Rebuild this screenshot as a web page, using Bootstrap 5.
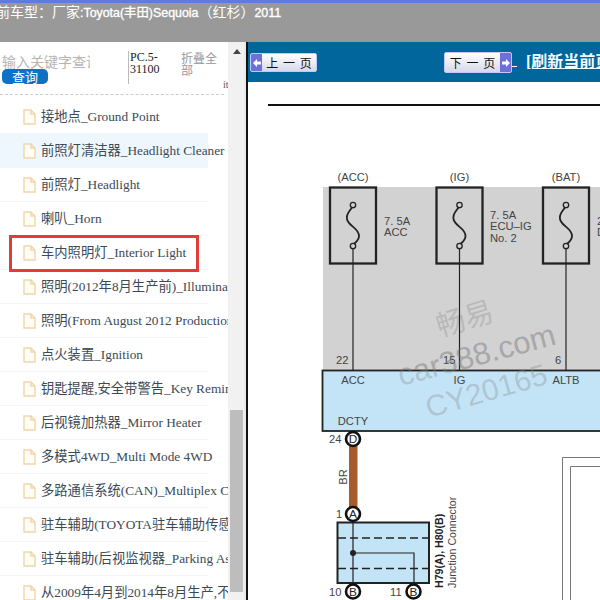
<!DOCTYPE html>
<html lang="zh">
<head>
<meta charset="utf-8">
<title>Sequoia</title>
<link href="https://cdn.jsdelivr.net/npm/bootstrap@5.3.0/dist/css/bootstrap.min.css" rel="stylesheet">
<style>
html,body{height:100%;overflow:hidden;margin:0}
body{font-family:"Liberation Serif","Noto Sans CJK SC",serif;background:#fff}
.frame{width:600px;height:600px;overflow:hidden}
.topstrip{height:42px;background:#999;border-top:3px solid #5b7fd6;flex:none;overflow:hidden}
.toptext{font:14px/18px "Liberation Sans","Noto Sans CJK SC",sans-serif;color:#fff;margin:0 0 0 -18px;white-space:pre}
.toptext b{font-size:12.4px;font-weight:400;-webkit-text-stroke:.35px #fff}
.bodyrow{height:558px}
.side{width:228px;flex:none;overflow:hidden}
.sidehead{height:58px;position:relative}
.searchcol{width:100px;padding:11px 0 0 2px;flex:none}
.keyinput{border:0;padding:0;width:88px;height:16px;font:14px/16px "Noto Sans CJK SC",sans-serif;display:block;background:transparent}
.keyinput::placeholder{color:#b5b5b5}
.querybtn{display:block;width:46px;height:15px;padding:0;border:0;border-radius:5px;background:#0b72c8;color:#fff;font:13px/15px "Noto Sans CJK SC",sans-serif}
.pccol{width:52px;margin:9px 0 0 28px;height:33px;border-left:1px solid #bbb;padding-left:1px;font-size:12px;line-height:12px;color:#222;flex:none}
.foldcol{width:38px;margin:10px 0 0 1px;color:#999;font:12px/12px "Noto Sans CJK SC",sans-serif;flex:none}
.dashline{position:absolute;left:0;top:52px;width:224px;border-top:1px dashed #ccc}
.cutchar{position:absolute;left:223px;top:37px;font-size:10px;line-height:12px;color:#555}
.treelist{width:208px;border-radius:0}
.treerow{height:34px;padding:1px 0 0 23px;border:0;border-bottom:1px solid #f6f4f2;display:flex;align-items:center;gap:5px;background:transparent;font-size:13.3px;line-height:16px;color:#3c4a55;white-space:nowrap;overflow:visible}
.treerow.hovered{background:#eff7fe}
.fileicon{flex:none;width:13px;height:16px}
.redmark{position:absolute;left:9px;top:193px;width:190px;height:37px;border:3px solid #e23b3b;pointer-events:none}
.sbar{width:16px;flex:none;background:#f1f1f1;padding:0 1px 0 2px}
.sup{height:18px;display:flex;align-items:center;justify-content:center;padding-left:0}
.sthumb{height:182px;background:#bdbdbd;margin-top:350px}
.gutter{width:4px;flex:none;background:#e9e9e9;border-right:2px solid #111}
.mainpane{flex:1;min-width:0;overflow:hidden}
.bluebar{height:40px;background:#00669b;position:relative;flex:none}
.pagebtn{position:absolute;display:flex;padding:0;border:1px solid #c4c8f4;border-radius:2px;overflow:hidden;font:12px/17px "Noto Sans CJK SC",sans-serif;color:#111;background:linear-gradient(#fff,#d7d8ea)}
.pagebtn:hover{color:#111;background:linear-gradient(#fff,#d7d8ea)}
.prevbtn{left:2px;top:11px;width:67px;height:19px}
.nextbtn{left:196px;top:10px;width:68px;height:21px;line-height:19px}
.arrowcell{width:11px;background:#6d6fdc;display:flex;align-items:center;justify-content:center;flex:none}
.labelcell{flex:1;text-align:center;word-spacing:2px;white-space:pre}
.refreshlink{position:absolute;left:278px;top:10px;color:#f2fbff;font-size:16px;line-height:20px;font-weight:700;white-space:nowrap;text-decoration:underline}
.refreshlink:hover{color:#f2fbff}
.tinyunder{position:absolute;left:264px;top:10px;color:#fff;font-size:10px;line-height:20px;text-decoration:underline;white-space:pre}
.diagram{display:block;width:352px;height:518px}
.dtxt{font-family:"Liberation Sans",sans-serif;font-size:11.2px;fill:#444}
.dsign{font-size:11.800px;fill:#222}
.dmark{font-family:"Liberation Sans","Noto Sans CJK SC",sans-serif;fill:#8a8a8a;fill-opacity:.36}
</style>
</head>
<body>
<div class="frame d-flex flex-column">
  <div class="topstrip"><p class="toptext">当前车型：厂家<b>:Toyota(丰田)Sequoia</b>（红杉）<b>2011</b></p></div>
  <div class="bodyrow d-flex">
    <aside class="side position-relative">
      <div class="sidehead d-flex">
        <div class="searchcol">
          <input class="keyinput" type="text" placeholder="输入关键字查询" aria-label="关键字">
          <button class="querybtn" type="button">查询</button>
        </div>
        <div class="pccol">PC.5-31100</div>
        <div class="foldcol">折叠全部</div>
        <span class="cutchar">it</span>
        <div class="dashline"></div>
      </div>
      <ul class="list-group treelist">
        <li class="list-group-item treerow"><svg class="fileicon" viewBox="0 0 13 16"><path d="M1 1h7l4 4v10H1z M8 1v4h4" fill="#fffdf8" stroke="#f3d5a6" stroke-width="1.4"/></svg>接地点_Ground Point</li>
        <li class="list-group-item treerow hovered"><svg class="fileicon" viewBox="0 0 13 16"><path d="M1 1h7l4 4v10H1z M8 1v4h4" fill="#fffdf8" stroke="#f3d5a6" stroke-width="1.4"/></svg>前照灯清洁器_Headlight Cleaner</li>
        <li class="list-group-item treerow"><svg class="fileicon" viewBox="0 0 13 16"><path d="M1 1h7l4 4v10H1z M8 1v4h4" fill="#fffdf8" stroke="#f3d5a6" stroke-width="1.4"/></svg>前照灯_Headlight</li>
        <li class="list-group-item treerow"><svg class="fileicon" viewBox="0 0 13 16"><path d="M1 1h7l4 4v10H1z M8 1v4h4" fill="#fffdf8" stroke="#f3d5a6" stroke-width="1.4"/></svg>喇叭_Horn</li>
        <li class="list-group-item treerow"><svg class="fileicon" viewBox="0 0 13 16"><path d="M1 1h7l4 4v10H1z M8 1v4h4" fill="#fffdf8" stroke="#f3d5a6" stroke-width="1.4"/></svg>车内照明灯_Interior Light</li>
        <li class="list-group-item treerow"><svg class="fileicon" viewBox="0 0 13 16"><path d="M1 1h7l4 4v10H1z M8 1v4h4" fill="#fffdf8" stroke="#f3d5a6" stroke-width="1.4"/></svg>照明(2012年8月生产前)_Illumination</li>
        <li class="list-group-item treerow"><svg class="fileicon" viewBox="0 0 13 16"><path d="M1 1h7l4 4v10H1z M8 1v4h4" fill="#fffdf8" stroke="#f3d5a6" stroke-width="1.4"/></svg>照明(From August 2012 Production)</li>
        <li class="list-group-item treerow"><svg class="fileicon" viewBox="0 0 13 16"><path d="M1 1h7l4 4v10H1z M8 1v4h4" fill="#fffdf8" stroke="#f3d5a6" stroke-width="1.4"/></svg>点火装置_Ignition</li>
        <li class="list-group-item treerow"><svg class="fileicon" viewBox="0 0 13 16"><path d="M1 1h7l4 4v10H1z M8 1v4h4" fill="#fffdf8" stroke="#f3d5a6" stroke-width="1.4"/></svg>钥匙提醒,安全带警告_Key Reminder</li>
        <li class="list-group-item treerow"><svg class="fileicon" viewBox="0 0 13 16"><path d="M1 1h7l4 4v10H1z M8 1v4h4" fill="#fffdf8" stroke="#f3d5a6" stroke-width="1.4"/></svg>后视镜加热器_Mirror Heater</li>
        <li class="list-group-item treerow"><svg class="fileicon" viewBox="0 0 13 16"><path d="M1 1h7l4 4v10H1z M8 1v4h4" fill="#fffdf8" stroke="#f3d5a6" stroke-width="1.4"/></svg>多模式4WD_Multi Mode 4WD</li>
        <li class="list-group-item treerow"><svg class="fileicon" viewBox="0 0 13 16"><path d="M1 1h7l4 4v10H1z M8 1v4h4" fill="#fffdf8" stroke="#f3d5a6" stroke-width="1.4"/></svg>多路通信系统(CAN)_Multiplex Communication</li>
        <li class="list-group-item treerow"><svg class="fileicon" viewBox="0 0 13 16"><path d="M1 1h7l4 4v10H1z M8 1v4h4" fill="#fffdf8" stroke="#f3d5a6" stroke-width="1.4"/></svg>驻车辅助(TOYOTA驻车辅助传感器)</li>
        <li class="list-group-item treerow"><svg class="fileicon" viewBox="0 0 13 16"><path d="M1 1h7l4 4v10H1z M8 1v4h4" fill="#fffdf8" stroke="#f3d5a6" stroke-width="1.4"/></svg>驻车辅助(后视监视器_Parking Assist</li>
        <li class="list-group-item treerow"><svg class="fileicon" viewBox="0 0 13 16"><path d="M1 1h7l4 4v10H1z M8 1v4h4" fill="#fffdf8" stroke="#f3d5a6" stroke-width="1.4"/></svg>从2009年4月到2014年8月生产,不带</li>
      </ul>
      <div class="redmark"></div>
    </aside>
    <div class="sbar">
      <div class="sup"><svg width="8" height="5" viewBox="0 0 8 5"><path d="M4 0l4 5H0z" fill="#444"/></svg></div>
      <div class="sthumb"></div>
    </div>
    <div class="gutter"></div>
    <main class="mainpane d-flex flex-column">
      <div class="bluebar">
        <a class="btn pagebtn prevbtn" href="#"><span class="arrowcell"><svg width="8" height="8" viewBox="0 0 8 8"><path d="M0 4l4-4v2.500h4v3H4V8z" fill="#fff"/></svg></span><span class="labelcell">上 一 页</span></a>
        <a class="btn pagebtn nextbtn" href="#"><span class="labelcell">下 一 页</span><span class="arrowcell"><svg width="8" height="8" viewBox="0 0 8 8"><path d="M8 4L4 0v2.500H0v3h4V8z" fill="#fff"/></svg></span></a>
        <span class="tinyunder">&nbsp;&nbsp;</span>
        <a class="refreshlink" href="#">[刷新当前页]</a>
      </div>
      <svg class="diagram" viewBox="248 82 352 518" xmlns="http://www.w3.org/2000/svg">
        <rect x="268" y="104" width="332" height="2" fill="#111"/>
        <rect x="323" y="187" width="277" height="183" fill="#d2d2d3"/>
        <text class="dmark" font-size="29" transform="translate(440 337) rotate(-17)">畅易</text>
        <text class="dmark" font-size="31" transform="translate(401 386) rotate(-15)">car388.com</text>
        <g fill="none" stroke="#222">
          <rect x="330" y="187.500" width="46" height="76" stroke-width="2.300"/>
          <circle cx="353" cy="205" r="2.700" stroke-width="1.300"/>
          <circle cx="353" cy="246" r="2.700" stroke-width="1.300"/>
          <path d="M352 207.500C349 212 346 214 347 219C348 226 359 228 359 236C359 240 356 242 354 244" stroke-width="1.800"/>
          <path d="M353 248.500V370" stroke-width="1.200"/>
        </g>
        <g fill="none" stroke="#222">
          <rect x="436.500" y="187.500" width="46" height="76" stroke-width="2.300"/>
          <circle cx="459.500" cy="205" r="2.700" stroke-width="1.300"/>
          <circle cx="459.500" cy="246" r="2.700" stroke-width="1.300"/>
          <path d="M458.500 207.500C455.500 212 452.500 214 453.500 219C454.500 226 465.500 228 465.500 236C465.500 240 462.500 242 460.500 244" stroke-width="1.800"/>
          <path d="M459.500 248.500V370" stroke-width="1.200"/>
        </g>
        <g fill="none" stroke="#222">
          <rect x="543" y="187.500" width="46" height="76" stroke-width="2.300"/>
          <circle cx="566" cy="205" r="2.700" stroke-width="1.300"/>
          <circle cx="566" cy="246" r="2.700" stroke-width="1.300"/>
          <path d="M565 207.500C562 212 559 214 560 219C561 226 572 228 572 236C572 240 569 242 567 244" stroke-width="1.800"/>
          <path d="M566 248.500V370" stroke-width="1.200"/>
        </g>
        <text class="dtxt" x="353" y="181" text-anchor="middle">(ACC)</text>
        <text class="dtxt" x="459.500" y="181" text-anchor="middle">(IG)</text>
        <text class="dtxt" x="566" y="181" text-anchor="middle">(BAT)</text>
        <text class="dtxt" x="384" y="225">7. 5A</text>
        <text class="dtxt" x="384" y="236">ACC</text>
        <text class="dtxt" x="490" y="219">7. 5A</text>
        <text class="dtxt" x="490" y="230">ECU–IG</text>
        <text class="dtxt" x="490" y="242">No. 2</text>
        <text class="dtxt" x="597" y="225">2</text>
        <text class="dtxt" x="597" y="236">D</text>
        <text class="dtxt" x="336" y="364">22</text>
        <text class="dtxt" x="443" y="364">15</text>
        <text class="dtxt" x="555" y="364">6</text>
        <rect x="322.500" y="370.500" width="280" height="60.500" fill="#c3e4f7" stroke="#222" stroke-width="1.800"/>
        <text class="dmark" font-size="31" transform="translate(401 386) rotate(-15)" aria-hidden="true">car388.com</text>
        <text class="dmark" font-size="30" transform="translate(429 418) rotate(-16)">CY20165</text>
        <text class="dtxt" x="353" y="384" text-anchor="middle">ACC</text>
        <text class="dtxt" x="459.500" y="384" text-anchor="middle">IG</text>
        <text class="dtxt" x="566" y="384" text-anchor="middle">ALTB</text>
        <text class="dtxt" x="353" y="425" text-anchor="middle">DCTY</text>
        <rect x="349" y="445" width="8.500" height="62" fill="#a75b2c"/>
        <text class="dtxt" x="346.500" y="477" text-anchor="middle" transform="rotate(-90 346.500 477)">BR</text>
        <rect x="337.500" y="522.500" width="91.500" height="60.500" fill="#c3e4f7" stroke="#222" stroke-width="2"/>
        <path d="M338 538H429M338 568.500H429" stroke="#222" stroke-width="1.700" stroke-dasharray="8 4" fill="none"/>
        <path d="M353 520V584M353 553H414V584" stroke="#222" stroke-width="1.200" fill="none"/>
        <circle cx="353" cy="553" r="3" fill="#222"/>
        <g fill="#fff" stroke="#111" stroke-width="2.600">
          <circle cx="353" cy="439" r="7"/>
          <circle cx="353" cy="514" r="7"/>
          <circle cx="353" cy="591.500" r="7"/>
          <circle cx="413.500" cy="591.500" r="7"/>
        </g>
        <g text-anchor="middle">
          <text class="dtxt dsign" x="353" y="443">D</text>
          <text class="dtxt dsign" x="353" y="518">A</text>
          <text class="dtxt dsign" x="353" y="595.500">B</text>
          <text class="dtxt dsign" x="413.500" y="595.500">B</text>
        </g>
        <text class="dtxt" x="329" y="443">24</text>
        <text class="dtxt" x="336" y="518">1</text>
        <text class="dtxt" x="329" y="596">10</text>
        <text class="dtxt" x="390" y="596">11</text>
        <text class="dtxt dsign" font-weight="700" x="443" y="588" transform="rotate(-90 443 588)" style="font-size:10.6px">H79(A), H80(B)</text>
        <text class="dtxt" x="456" y="588" transform="rotate(-90 456 588)" style="font-size:10.600px">Junction Connector</text>
        <path d="M562.500 600V457.500H600M570.500 600V466.500H600" fill="none" stroke="#777" stroke-width="1"/>
      </svg>
    </main>
  </div>
</div>
<script src="https://cdn.jsdelivr.net/npm/bootstrap@5.3.0/dist/js/bootstrap.bundle.min.js"></script>
</body>
</html>
